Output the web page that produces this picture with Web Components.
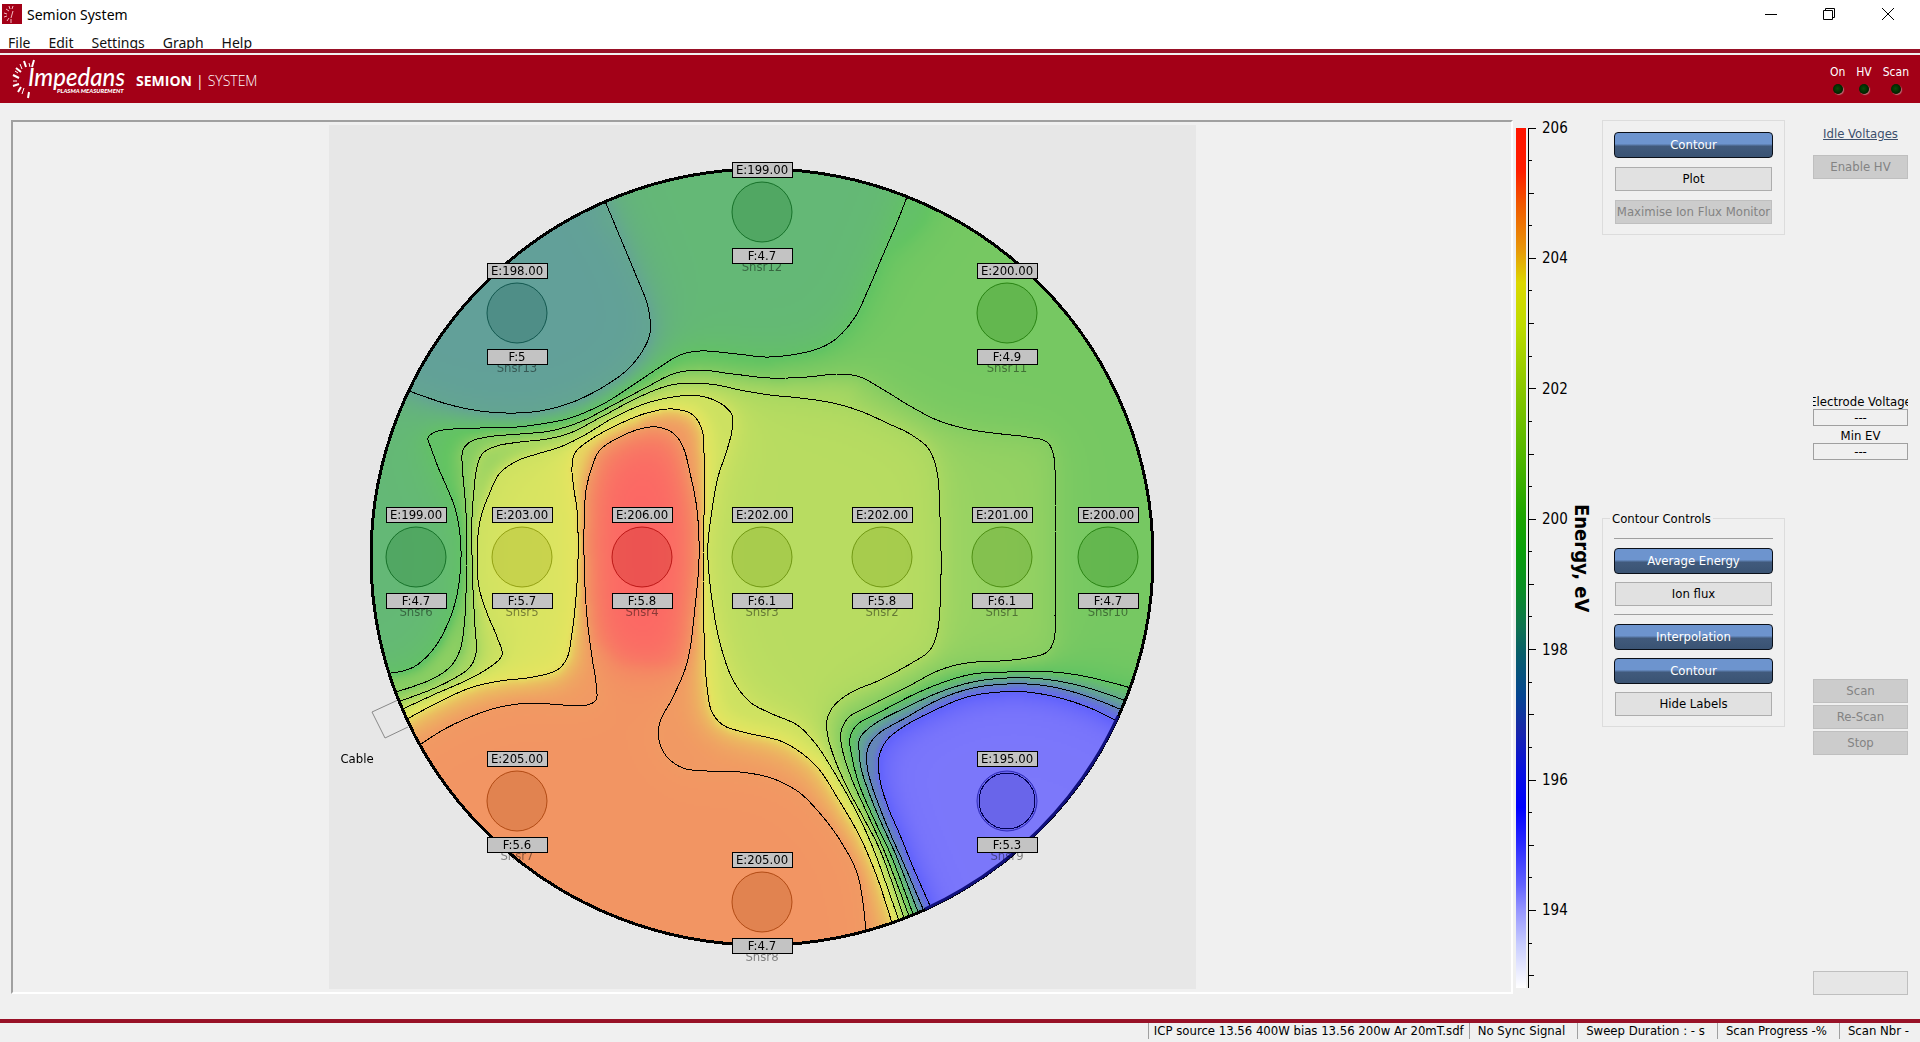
<!DOCTYPE html>
<html lang="en">
<head>
<meta charset="utf-8">
<title>Semion System</title>
<style>
html, body { margin: 0; height: 100%; }
body { background: #f0f0f0; color: #000; font: 13px/16px "DejaVu Sans Condensed", "DejaVu Sans", sans-serif; overflow: hidden; }
</style>
</head>
<body>
<semion-app></semion-app>

<script>
const define = (name, html, setup) => {
  const template = document.createElement('template');
  template.innerHTML = html;
  customElements.define(name, class extends HTMLElement {
    constructor() {
      super();
      this.attachShadow({ mode: 'open' }).append(template.content.cloneNode(true));
    }
    connectedCallback() { if (setup) setup(this, this.shadowRoot); }
  });
};

define('title-bar', `
<style>
:host { display: flex; align-items: center; height: 28px; padding: 0 2px; background: #fff; font: 14px/20px "Noto Sans", sans-serif; }
.name { margin-left: 5px; flex: 1; padding-top: 2px; }
.controls { display: flex; }
button { all: unset; width: 58px; height: 28px; display: grid; place-items: center; }
.last { width: 60px; }
svg { display: block; }
</style>
<svg width="20" height="20" viewBox="0 0 20 20"><path d="M0 0h20v20H0z" fill="#a30017"/><path d="M11 2l-1 3M7 2l1 3M4 5l3 2M2 9l3 1M2 13l3-1M5 17l2-3M9 19v-4M11 7l-2 7" stroke="#f3bcc3" fill="none"/></svg>
<span class="name">Semion System</span>
<div class="controls">
<button aria-label="Minimise"><svg width="12" height="12"><path d="M0 6.5h12" stroke="#000"/></svg></button>
<button aria-label="Restore"><svg width="12" height="12" fill="none" stroke="#000"><path d="M.5 2.500h9v9h-9zM2.500 2.500v-2h9v9h-2"/></svg></button>
<button class="last" aria-label="Close"><svg width="12" height="12"><path d="M0 0l12 12M12 0L0 12" stroke="#000"/></svg></button>
</div>`);

define('menu-bar', `
<style>
:host { display: flex; gap: 18px; height: 21px; padding-left: 8px; background: #fff; border-bottom: 4px solid #981127; overflow: hidden; font: 14px/30px "Noto Sans", sans-serif; }
a { color: #111; text-decoration: none; }
</style>
<a href="#file">File</a><a href="#edit">Edit</a><a href="#settings">Settings</a><a href="#graph">Graph</a><a href="#help">Help</a>`);

define('status-led', `
<style>
:host { display: grid; justify-items: center; gap: 4px; color: #fff; font-size: 12px; }
i { width: 10px; height: 10px; border-radius: 50%; background: radial-gradient(circle at 45% 45%, #0a4a08, #002600 60%); box-shadow: 1px 1px 1px #b8707a; }
</style>
<slot></slot><i></i>`);

define('brand-header', `
<style>
:host { display: flex; align-items: center; height: 48px; margin-top: 2px; padding: 0 11px 0 10px; background: #a30017; color: #fff; box-sizing: border-box; }
.product { display: flex; gap: 4px; margin-left: 10px; flex: 1; padding-top: 3px; font: 14px/20px "Open Sans", sans-serif; }
b { font-weight: 700; }
.light { font-weight: 300; }
.leds { display: flex; gap: 11px; }
svg { display: block; }
text { fill: #fff; font-family: Lato, "Open Sans", sans-serif; font-style: italic; }
</style>
<svg width="116" height="48" viewBox="10 55 116 48" role="img" aria-label="Impedans Plasma Measurement">
<path fill="none" stroke="#fff" stroke-width="2" d="M34 60l-2 7M24 61l2 6M16 68l5 4M13 75l6 3M13 86l6-2M18 92l3-5M28 98l1-6"/>
<path fill="none" stroke="#fff" stroke-width="1" d="M29 63l1 4M20 64l2 5M15 71l3 2M13 81h4M22 94l2-6"/>
<text x="28" y="86" font-size="24" font-weight="500">Impedans</text>
<text x="57" y="93" font-size="6" font-weight="900">PLASMA MEASUREMENT</text>
</svg>
<div class="product"><b>SEMION</b><span>|</span><span class="light">SYSTEM</span></div>
<div class="leds"><status-led>On</status-led><status-led>HV</status-led><status-led>Scan</status-led></div>`);

define('push-button', `
<style>
:host { display: block; }
button { display: block; box-sizing: border-box; width: 100%; height: 24px; padding: 0; border: 1px solid #adadad; background: #e1e1e1; color: #000; font: inherit; white-space: nowrap; }
:host([tone="on"]) button { height: 26px; border: 1px solid #0a0f18; border-radius: 4px; color: #fff; background: linear-gradient(#6d94ce, #6d94ce 45%, #415a7c 55%, #3a5373); }
:host([tone="off"]) button { border-color: #bfbfbf; background: #ccc; color: #838383; }
:host([tone="blank"]) button { border-color: #bfbfbf; background: #e6e6e6; }
</style>
<button><slot></slot></button>`, (host, root) => {
  if (host.getAttribute('tone') === 'off') root.querySelector('button').disabled = true;
});

define('value-readout', `
<style>
:host { display: grid; justify-items: center; }
label { line-height: 14px; white-space: nowrap; }
.clip { width: 100%; display: flex; justify-content: center; overflow: hidden; }
input { box-sizing: border-box; width: 100%; height: 17px; padding: 0; border: 1px solid #a0a0a0; background: transparent; font: inherit; text-align: center; color: inherit; }
</style>
<div class="clip"><label for="v"><slot></slot></label></div><input id="v" value="---" readonly>`);

define('control-group', `
<style>
:host { display: block; }
fieldset { margin: 0; min-width: 0; border: 1px solid #dcdcdc; padding: 11px 11px 10px; display: grid; gap: 8px; }
:host([plain]) fieldset { gap: 9px; }
legend { padding: 0 2px; margin-left: -4px; }
:host([plain]) legend { display: none; }
::slotted(hr) { border: 0; border-top: 1px solid #a0a0a0; margin: 0; height: 1px; }
::slotted(push-button:not([tone="on"])) { margin: 0 1px; }
</style>
<fieldset><legend></legend><slot></slot></fieldset>`, (host, root) => {
  root.querySelector('legend').textContent = host.getAttribute('label') || '';
});

/* Colours of the map for an energy value, mixed with the pale backdrop. */
const STOPS = [
  [194.8, 126, 122, 250], [195.3, 120, 116, 251], [196, 100, 100, 252], [196.6, 100, 114, 222], [197.2, 100, 130, 190],
  [198, 98, 160, 153], [198.4, 100, 168, 142], [199, 100, 184, 118], [199.5, 99, 196, 98], [200, 118, 200, 98],
  [201, 150, 210, 98], [202, 184, 220, 97], [203, 216, 228, 97], [203.6, 229, 228, 96], [204.2, 235, 190, 96],
  [205, 242, 149, 99], [206, 253, 100, 100]
];
const mapColour = v => {
  let i = 1;
  while (i < STOPS.length - 1 && STOPS[i][0] < v) i++;
  const a = STOPS[i - 1], b = STOPS[i];
  const t = Math.max(0, Math.min(1, (v - a[0]) / (b[0] - a[0])));
  return [1, 2, 3].map(k => a[k] + (b[k] - a[k]) * t);
};

const ISOLINES = [
  [198.3, '605,201 620,237 635,273 648,307 650,333 643,350 627,370 603,387 573,402 540,411 510,413 480,411 447,404 409,391'],
  [199.4, '907,197 898,220 883,255 868,290 855,317 837,338 820,348 797,354 767,357 737,354 700,351 680,355 660,367 633,385 603,404 570,418 547,423 517,427 480,428 453,429 435,432 428,438 431,448 438,467 448,490 455,508 459,527 461,553 459,583 455,603 448,623 435,647 417,665 403,671 391,673'],
  [200.5, '396,692 430,680 450,667 460,650 464,627 466,593 466,557 466,513 464,487 462,463 463,450 470,442 487,437 520,434 550,431 580,422 613,405 647,387 673,374 697,370 733,374 770,378 807,377 840,374 860,377 887,392 910,406 937,420 967,429 993,433 1027,437 1047,442 1053,453 1055,470 1055,513 1055,617 1054,640 1047,652 1027,658 1000,661 967,663 940,670 907,687 867,707 848,718 841,732 842,748 851,777 867,813 885,853 909,916'],
  [201.6, '400,701 430,690 453,679 470,667 476,653 475,627 473,590 472,557 472,517 474,490 477,467 483,453 497,446 520,442 547,439 570,433 603,416 637,398 667,386 690,383 717,385 740,390 770,395 800,398 833,403 860,411 887,423 910,434 928,448 936,467 939,490 940,517 941,557 940,607 937,633 930,650 910,664 880,680 850,693 833,707 827,720 828,737 835,760 847,787 863,817 880,850 904,918'],
  [202.7, '403,709 433,695 467,680 490,667 502,655 497,637 487,613 479,587 477,557 479,527 482,513 488,497 500,473 517,461 537,454 560,447 583,436 613,418 647,403 680,396 700,396 720,403 732,415 732,430 727,450 718,477 712,510 708,543 708,560 712,600 720,643 733,680 750,702 770,713 797,725 815,743 837,777 857,813 873,848 899,921'],
  [203.8, '407,719 437,703 470,688 500,681 533,677 557,670 567,658 572,633 576,597 578,557 577,510 574,490 572,467 575,453 587,442 613,427 647,413 673,409 693,415 702,430 704,453 704,513 703,557 704,633 707,687 712,712 723,725 743,732 770,738 783,742 800,752 818,768 837,797 860,837 877,877 892,923'],
  [204.9, '421,744 443,730 470,717 500,707 533,703 563,705 587,705 596,700 596,683 592,657 587,617 584,557 585,500 587,485 592,467 600,450 620,437 640,429 657,427 673,433 683,447 690,473 697,510 699,557 695,607 687,663 673,697 660,722 659,740 667,757 683,768 707,771 740,772 768,777 783,783 800,793 823,817 843,845 857,873 863,903 866,932'],
  [199.4, '1131,688 1113,683 1083,676 1053,672 1007,672 973,674 947,681 917,693 880,712 857,725 850,738 852,757 859,784 873,817 890,853 913,914'],
  [198.3, '1126,701 1107,694 1077,685 1043,679 1007,678 973,682 940,692 907,707 873,725 860,738 859,750 861,768 868,790 880,820 895,853 918,912'],
  [197.2, '1122,710 1100,701 1070,691 1040,685 1007,684 973,688 940,699 907,717 877,735 868,748 867,765 871,783 878,803 890,833 903,862 923,909'],
  [196.1, '1117,721 1090,708 1060,698 1027,692 1000,692 967,697 933,711 903,727 887,740 879,757 880,780 888,807 900,835 913,867 931,908']
];

/* number, centre x, centre y, energy, flux */
const SENSORS = [
  [12, 762, 212, 199, '4.7'], [13, 517, 313, 198, '5'], [11, 1007, 313, 200, '4.9'], [6, 416, 557, 199, '4.7'],
  [5, 522, 557, 203, '5.7'], [4, 642, 557, 206, '5.8'], [3, 762, 557, 202, '6.1'], [2, 882, 557, 202, '5.8'],
  [1, 1002, 557, 201, '6.1'], [10, 1108, 557, 200, '4.7'], [7, 517, 801, 205, '5.6'], [9, 1007, 801, 195, '5.3'],
  [8, 762, 902, 205, '4.7']
];
/* Points between sensors 7 and 8 that keep the lower plateau level. */
const HELPERS = [[0, 640, 770, 205], [0, 590, 760, 205], [0, 682, 755, 205]];
const ORIGIN = { x: 329, y: 125, w: 867, h: 864 };
const DISC = { x: 762, y: 557, rx: 391, ry: 388 };

/* Smooth curve through the given points, sampled densely. */
const smooth = text => {
  const p = text.split(' ').map(s => s.split(',').map(Number));
  const out = [];
  for (let i = 0; i < p.length - 1; i++) {
    const a = p[i - 1] || p[i], b = p[i], c = p[i + 1], d = p[i + 2] || c;
    const tj = (u, v) => Math.pow(Math.hypot(v[0] - u[0], v[1] - u[1]), 0.5) || 1;
    const d0 = tj(a, b), d1 = tj(b, c), d2 = tj(c, d);
    const m = k => [
      d1 * ((b[k] - a[k]) / d0 - (c[k] - a[k]) / (d0 + d1) + (c[k] - b[k]) / d1),
      d1 * ((c[k] - b[k]) / d1 - (d[k] - b[k]) / (d1 + d2) + (d[k] - c[k]) / d2)
    ];
    const mx = m(0), my = m(1);
    const n = Math.ceil(d1 * d1 / 2);
    for (let j = 0; j < n; j++) {
      const t = j / n, t2 = t * t, t3 = t2 * t;
      const h = [2 * t3 - 3 * t2 + 1, t3 - 2 * t2 + t, -2 * t3 + 3 * t2, t3 - t2];
      out.push([
        h[0] * b[0] + h[1] * mx[0] + h[2] * c[0] + h[3] * mx[1],
        h[0] * b[1] + h[1] * my[0] + h[2] * c[1] + h[3] * my[1]
      ]);
    }
  }
  out.push(p[p.length - 1]);
  return out;
};

/* Interpolates energy between isolines and sensors by relaxing a field that
   is drawn towards the value of the sensor in each region. */
const paintField = (canvas, curves) => {
  const S = 2, W = Math.ceil(ORIGIN.w / S), H = Math.ceil(ORIGIN.h / S), N = W * H;
  canvas.width = W; canvas.height = H;
  const field = new Float32Array(N), fixed = new Uint8Array(N), inside = new Uint8Array(N);
  for (let y = 1; y < H - 1; y++) for (let x = 1; x < W - 1; x++) {
    const dx = (x * S + ORIGIN.x - DISC.x) / (DISC.rx + 6), dy = (y * S + ORIGIN.y - DISC.y) / (DISC.ry + 6);
    if (dx * dx + dy * dy < 1) inside[y * W + x] = 1;
  }
  const cell = (x, y) => Math.round((y - ORIGIN.y) / S) * W + Math.round((x - ORIGIN.x) / S);
  const pin = (x, y, v) => {
    const i = cell(x, y);
    if (inside[i]) { field[i] = v; fixed[i] = 1; }
  };
  for (const [v, pts] of curves) {
    pts.forEach(([x, y]) => pin(x, y, v));
    for (const [e, q] of [[pts[0], pts[4]], [pts[pts.length - 1], pts[pts.length - 5]]]) {
      const l = Math.hypot(e[0] - q[0], e[1] - q[1]);
      for (let k = 1; k < 16; k++) pin(e[0] + (e[0] - q[0]) / l * k, e[1] + (e[1] - q[1]) / l * k, v);
    }
  }
  const target = new Float32Array(N);
  const flood = (queue, values) => {
    for (let h = 0; h < queue.length; h++) {
      const i = queue[h];
      for (const j of [i - 1, i + 1, i - W, i + W])
        if (inside[j] && !fixed[j] && values[j] === 0) { values[j] = values[i]; queue.push(j); }
    }
  };
  flood([...SENSORS, ...HELPERS].map(([, x, y, v]) => { const i = cell(x, y); target[i] = v; return i; }), target);
  const edge = [];
  for (let i = 0; i < N; i++) if (fixed[i]) edge.push(i); else if (target[i]) field[i] = target[i];
  flood(edge, field);
  const cells = [];
  for (let i = 0; i < N; i++) if (inside[i] && !fixed[i]) cells.push(i);
  const list = Int32Array.from(cells), pull = 0.004;
  for (let k = 0; k < 240; k++) for (let n = 0; n < list.length; n++) {
    const i = list[n], c = field[i];
    const l = inside[i - 1] ? field[i - 1] : c, r = inside[i + 1] ? field[i + 1] : c;
    const u = inside[i - W] ? field[i - W] : c, d = inside[i + W] ? field[i + W] : c;
    let next = (l + r + u + d) / 4;
    if (target[i]) next += pull * (target[i] - next);
    field[i] = c + 1.8 * (next - c);
  }
  const ctx = canvas.getContext('2d'), img = ctx.createImageData(W, H);
  for (let i = 0; i < N; i++) if (inside[i]) {
    const rgb = mapColour(field[i]);
    img.data[i * 4] = rgb[0]; img.data[i * 4 + 1] = rgb[1]; img.data[i * 4 + 2] = rgb[2]; img.data[i * 4 + 3] = 255;
  }
  ctx.putImageData(img, 0, 0);
};

define('wafer-plot', `
<style>
:host { display: flex; justify-content: center; box-sizing: border-box; min-width: 0; min-height: 0; padding: 3px; border: 2px solid; border-color: #a0a0a0 #fff #fff #a0a0a0; }
.stage { display: grid; height: 100%; aspect-ratio: 867 / 864; background: #e7e7e7; }
canvas, svg { grid-area: 1 / 1; width: 100%; height: 100%; min-height: 0; display: block; }
canvas { clip-path: ellipse(45.1% 44.9% at 49.95% 50%); }
svg { z-index: 1; }
text { font-size: 13px; text-anchor: middle; }
.iso path { fill: none; stroke: #000; shape-rendering: crispEdges; }
.tag { fill: #c3c3c3; stroke: #000; shape-rendering: crispEdges; }
</style>
<div class="stage"><canvas></canvas><svg viewBox="329 125 867 864"></svg></div>`, (host, root) => {
  const curves = ISOLINES.map(([v, text]) => [v, smooth(text)]);
  paintField(root.querySelector('canvas'), curves);
  let s = '<g class="iso">';
  for (const [, pts] of curves) s += `<path d="M${pts.map(p => p[0].toFixed(1) + ' ' + p[1].toFixed(1)).join('L')}"/>`;
  s += '</g><path d="M398 700l-26 12 13 26 23-11" fill="none" stroke="#888"/>';
  s += `<ellipse cx="${DISC.x}" cy="${DISC.y}" rx="${DISC.rx}" ry="${DISC.ry}" fill="none" stroke="#000" stroke-width="3" shape-rendering="crispEdges"/>`;
  s += `<path d="M1118 716A${DISC.rx} ${DISC.ry} 0 0 1 925 909" fill="none" stroke="#10107c" stroke-width="3"/>`;
  s += '<text x="357" y="763">Cable</text>';
  for (const [n, x, y, e, f] of SENSORS) {
    const rim = mapColour(e).map(c => Math.round(Math.max(0, (c - 95) * 1.1)));
    s += `<circle cx="${x}" cy="${y}" r="30" fill="rgb(${rim})" fill-opacity=".2" stroke="rgb(${rim})" stroke-opacity=".8"/>`;
    if (n === 9) s += `<circle cx="${x}" cy="${y}" r="28" fill="none" stroke="#000050" shape-rendering="crispEdges"/>`;
    s += `<text x="${x}" y="${y + 59}" fill-opacity=".45">Snsr${n}</text>`;
    s += `<rect class="tag" x="${x - 30}" y="${y - 50}" width="60" height="15"/><text x="${x}" y="${y - 38}">E:${e}.00</text>`;
    s += `<rect class="tag" x="${x - 30}" y="${y + 36}" width="60" height="15"/><text x="${x}" y="${y + 48}">F:${f}</text>`;
  }
  root.querySelector('svg').innerHTML = s;
});

define('energy-scale', `
<style>
:host { display: flex; box-sizing: border-box; padding: 8px 0 6px; }
.ramp { width: 10px; background: linear-gradient(#ff1400 0%, #ff1e00 5%, #f05a00 9%, #e8960a 14%, #dcd800 18%, #bedc00 23%, #8cc800 30%, #5ab900 37%, #1ea500 45%, #0aa00a 49%, #0a8c28 54%, #0f7350 58%, #085f69 61%, #054691 66%, #1928aa 70%, #080fe1 75%, #0000ff 79%, #2828ff 83%, #6464ff 88%, #9696ff 91%, #c8cdff 95%, #fff 100%); }
svg { margin-left: 2px; width: 40px; height: 100%; overflow: visible; }
line { stroke: #000; shape-rendering: crispEdges; }
text { font-size: 15px; dominant-baseline: central; }
.title { margin-left: 3px; writing-mode: vertical-rl; align-self: center; font-size: 20px; line-height: 22px; font-weight: 700; }
</style>
<div class="ramp"></div><svg></svg><div class="title">Energy, eV</div>`, (host, root) => {
  const low = 192.81, high = 206;
  let s = '<line x1=".5" x2=".5" y1="0" y2="100%"/>';
  for (let v = 206; v > low; v -= 0.5) {
    const y = ((high - v) / (high - low) * 100).toFixed(2) + '%';
    const len = v % 2 === 0 ? 8 : v % 1 === 0 ? 6 : 4;
    s += `<line x1="0" x2="${len}" y1="${y}" y2="${y}"/>`;
    if (v % 2 === 0) s += `<text x="14" y="${y}">${v}</text>`;
  }
  root.querySelector('svg').innerHTML = s;
});

define('status-bar', `
<style>
:host { display: flex; justify-content: flex-end; height: 19px; border-top: 4px solid #981127; line-height: 16px; white-space: nowrap; }
::slotted(span) { border-left: 1px solid #a0a0a0; padding: 0 9px 0 8px; margin-right: 3px; height: 16px; }
::slotted(span:first-child) { padding: 0 2px 0 5px; }
::slotted(span:last-child) { margin-right: 2px; }
</style>
<slot></slot>`);

define('semion-app', `
<style>
:host { display: flex; flex-direction: column; height: 100vh; }
main { flex: 1; min-height: 0; display: grid; grid-template: minmax(0, 1fr) / minmax(0, 1fr) 86px 183px 95px; padding: 17px 40px 25px 11px; }
wafer-plot { margin-right: 3px; }
.modes { display: flex; flex-direction: column; }
.modes .upper { margin-bottom: 8px; }
.modes .lower { margin: auto 0; }
.actions { display: flex; flex-direction: column; justify-content: space-between; margin: 0 -28px -1px 28px; }
.pack { display: grid; gap: 2px; }
.readings { gap: 3px; }
.top { gap: 13px; padding-top: 6px; }
.scans { padding-top: 3px; }
a { color: #3c4f6c; justify-self: center; }
</style>
<title-bar></title-bar>
<menu-bar></menu-bar>
<brand-header></brand-header>
<main>
<wafer-plot></wafer-plot>
<energy-scale></energy-scale>
<div class="modes">
<control-group class="upper" plain>
<push-button tone="on">Contour</push-button>
<push-button>Plot</push-button>
<push-button tone="off">Maximise Ion Flux Monitor</push-button>
</control-group>
<control-group class="lower" label="Contour Controls">
<hr>
<push-button tone="on">Average Energy</push-button>
<push-button>Ion flux</push-button>
<hr>
<push-button tone="on">Interpolation</push-button>
<push-button tone="on">Contour</push-button>
<push-button>Hide Labels</push-button>
</control-group>
</div>
<div class="actions">
<div class="pack top"><a href="#idle">Idle Voltages</a><push-button tone="off">Enable HV</push-button></div>
<div class="pack readings"><value-readout>Electrode Voltage</value-readout><value-readout>Min EV</value-readout></div>
<div class="pack scans"><push-button tone="off">Scan</push-button><push-button tone="off">Re-Scan</push-button><push-button tone="off">Stop</push-button></div>
<push-button tone="blank"></push-button>
</div>
</main>
<status-bar><span>ICP source 13.56 400W bias 13.56 200w Ar 20mT.sdf</span><span>No Sync Signal</span><span>Sweep Duration : - s</span><span>Scan Progress -%</span><span>Scan Nbr -</span></status-bar>`);
</script>
</body>
</html>
